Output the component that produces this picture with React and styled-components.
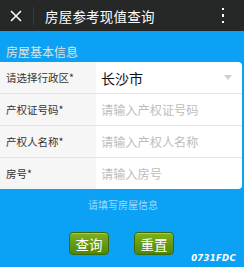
import React from "react";
import styled, { createGlobalStyle } from "styled-components";

const Global = createGlobalStyle`
  html, body { margin: 0; padding: 0; }
  body {
    width: 244px; height: 267px; overflow: hidden;
    background: #0ba2f6;
    font-family: "Noto Sans CJK SC", "Noto Sans", sans-serif;
  }
`;

const Page = styled.div`
  position: relative;
  width: 244px;
  height: 267px;
  background: #0ba2f6;
`;

const Header = styled.div`
  height: 31px;
  background: #262727;
  display: flex;
  align-items: center;
  padding-left: 10px;
  box-sizing: border-box;
`;

const Close = styled.svg`
  width: 12px;
  height: 12px;
  flex: none;
`;

const Divider = styled.div`
  width: 1px;
  height: 18px;
  background: #3a3b3b;
  margin-left: 11px;
  margin-right: 11px;
`;

const Title = styled.div`
  color: #fff;
  font-size: 13.5px;
  flex: 1;
  letter-spacing: 0.2px;
`;

const Dots = styled.div`
  display: flex;
  flex-direction: column;
  gap: 4px;
  margin-right: 20px;
  span {
    width: 2.5px;
    height: 2.5px;
    background: #fff;
  }
`;

const SectionTitle = styled.div`
  height: 31px;
  box-sizing: border-box;
  padding: 14px 0 0 6px;
  color: #cfe6f2;
  font-size: 12px;
  line-height: 14px;
  text-shadow: 0 0 1px #5a8fa8;
`;

const Form = styled.div`
  width: 242px;
  background: #fff;
  border-radius: 0 4px 4px 0;
  overflow: hidden;
`;

const Row = styled.div`
  display: flex;
  height: 32px;
  border-bottom: 1px solid #e3e3e3;
  box-sizing: border-box;
  &:last-child { border-bottom: none; height: 31px; }
`;

const Label = styled.div`
  width: 96px;
  background: #f6f6f6;
  display: flex;
  align-items: center;
  padding-left: 6px;
  box-sizing: border-box;
  font-size: 10.5px;
  color: #333;
`;

const Field = styled.div`
  flex: 1;
  display: flex;
  align-items: center;
  padding-left: 5px;
  padding-right: 10px;
  font-size: ${(p) => (p.$value ? "14px" : "12.2px")};
  color: ${(p) => (p.$value ? "#111" : "#bdbdbd")};
`;

const Caret = styled.div`
  margin-left: auto;
  width: 0;
  height: 0;
  border-left: 4px solid transparent;
  border-right: 4px solid transparent;
  border-top: 5px solid #cfcfcf;
`;

const Hint = styled.div`
  text-align: center;
  margin-top: 9px;
  font-size: 10px;
  color: #a6d9f5;
  height: 14px;
  line-height: 14px;
  padding-left: 2px;
`;

const Buttons = styled.div`
  display: flex;
  justify-content: center;
  gap: 25px;
  margin-top: 20px;
  padding-right: 1px;
`;

const Button = styled.div`
  width: 40px;
  height: 23px;
  box-sizing: border-box;
  border: 1px solid #3d6a06;
  border-radius: 4px;
  background: linear-gradient(#7fb21c, #4f8606);
  color: #fff;
  font-size: 13.5px;
  display: flex;
  align-items: center;
  justify-content: center;
  box-shadow: inset 0 1px 0 rgba(255,255,255,0.3);
`;

const Watermark = styled.div`
  position: absolute;
  right: 8px;
  bottom: 4px;
  color: #fff;
  font-family: "DejaVu Sans", sans-serif;
  font-weight: bold;
  font-style: italic;
  font-size: 8.5px;
  letter-spacing: 0.3px;
`;

const rows = [
  { label: "请选择行政区*", value: "长沙市", select: true },
  { label: "产权证号码*", placeholder: "请输入产权证号码" },
  { label: "产权人名称*", placeholder: "请输入产权人名称" },
  { label: "房号*", placeholder: "请输入房号" },
];

export default function App() {
  return (
    <Page>
      <Global />
      <Header>
        <Close viewBox="0 0 12 12">
          <path d="M1 1 L11 11 M11 1 L1 11" stroke="#fff" strokeWidth="1.5" fill="none" />
        </Close>
        <Divider />
        <Title>房屋参考现值查询</Title>
        <Dots>
          <span />
          <span />
          <span />
        </Dots>
      </Header>
      <SectionTitle>房屋基本信息</SectionTitle>
      <Form>
        {rows.map((r) => (
          <Row key={r.label}>
            <Label>{r.label}</Label>
            <Field $value={!!r.value}>
              {r.value || r.placeholder}
              {r.select && <Caret />}
            </Field>
          </Row>
        ))}
      </Form>
      <Hint>请填写房屋信息</Hint>
      <Buttons>
        <Button>查询</Button>
        <Button>重置</Button>
      </Buttons>
      <Watermark>0731FDC</Watermark>
    </Page>
  );
}
